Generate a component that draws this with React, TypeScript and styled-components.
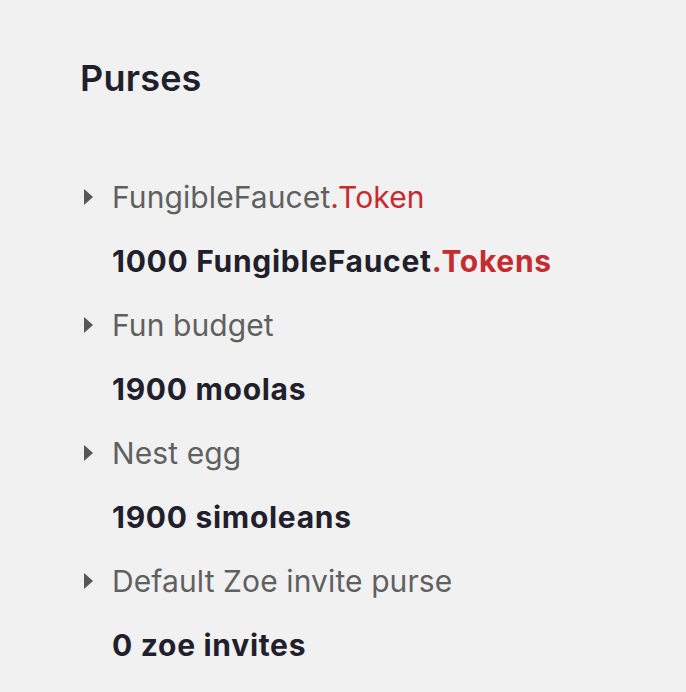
import React from "react";
import styled, { createGlobalStyle } from "styled-components";

const GlobalStyle = createGlobalStyle`
  html, body {
    margin: 0;
    padding: 0;
    background: #f1f1f1;
  }
  body {
    font-family: Inter, "Noto Sans", sans-serif;
    -webkit-font-smoothing: antialiased;
  }
`;

type Purse = {
  name: string;
  brand?: string;
  amount: string;
  unit: string;
  unitBrand?: string;
};

const purses: Purse[] = [
  {
    name: "FungibleFaucet",
    brand: ".Token",
    amount: "1000",
    unit: "FungibleFaucet",
    unitBrand: ".Tokens",
  },
  { name: "Fun budget", amount: "1900", unit: "moolas" },
  { name: "Nest egg", amount: "1900", unit: "simoleans" },
  { name: "Default Zoe invite purse", amount: "0", unit: "zoe invites" },
];

const Page = () => {
  return (
    <Wrapper>
      <GlobalStyle />
      <Title>Purses</Title>
      <List>
        {purses.map((p) => (
          <Item key={p.name}>
            <Label>
              <Caret />
              <span>
                {p.name}
                {p.brand && <Brand>{p.brand}</Brand>}
              </span>
            </Label>
            <Value>
              {p.amount} {p.unit}
              {p.unitBrand && <Brand>{p.unitBrand}</Brand>}
            </Value>
          </Item>
        ))}
      </List>
    </Wrapper>
  );
};

const Wrapper = styled.div`
  padding: 56px 0 0 80px;
`;

const Title = styled.h2`
  margin: 0;
  font-size: 36px;
  font-weight: 600;
  line-height: 44px;
  letter-spacing: 0.2px;
  color: #221f2c;
`;

const List = styled.ul`
  list-style: none;
  margin: 65px 0 0;
  padding: 0;
`;

const Item = styled.li`
  display: flex;
  flex-direction: column;
`;

const Label = styled.div`
  display: flex;
  align-items: center;
  height: 64px;
  font-size: 30px;
  letter-spacing: 0.1px;
  color: #606060;
`;

const Caret = styled.span`
  flex: none;
  width: 0;
  height: 0;
  margin: 0 19px 0 4px;
  border-top: 8px solid transparent;
  border-bottom: 8px solid transparent;
  border-left: 9px solid #575757;
`;

const Value = styled.div`
  height: 64px;
  display: flex;
  align-items: center;
  padding-left: 32px;
  font-size: 30px;
  font-weight: 700;
  letter-spacing: 0.7px;
  color: #221f2c;
`;

const Brand = styled.span`
  color: #c62b2f;
`;

export default Page;
